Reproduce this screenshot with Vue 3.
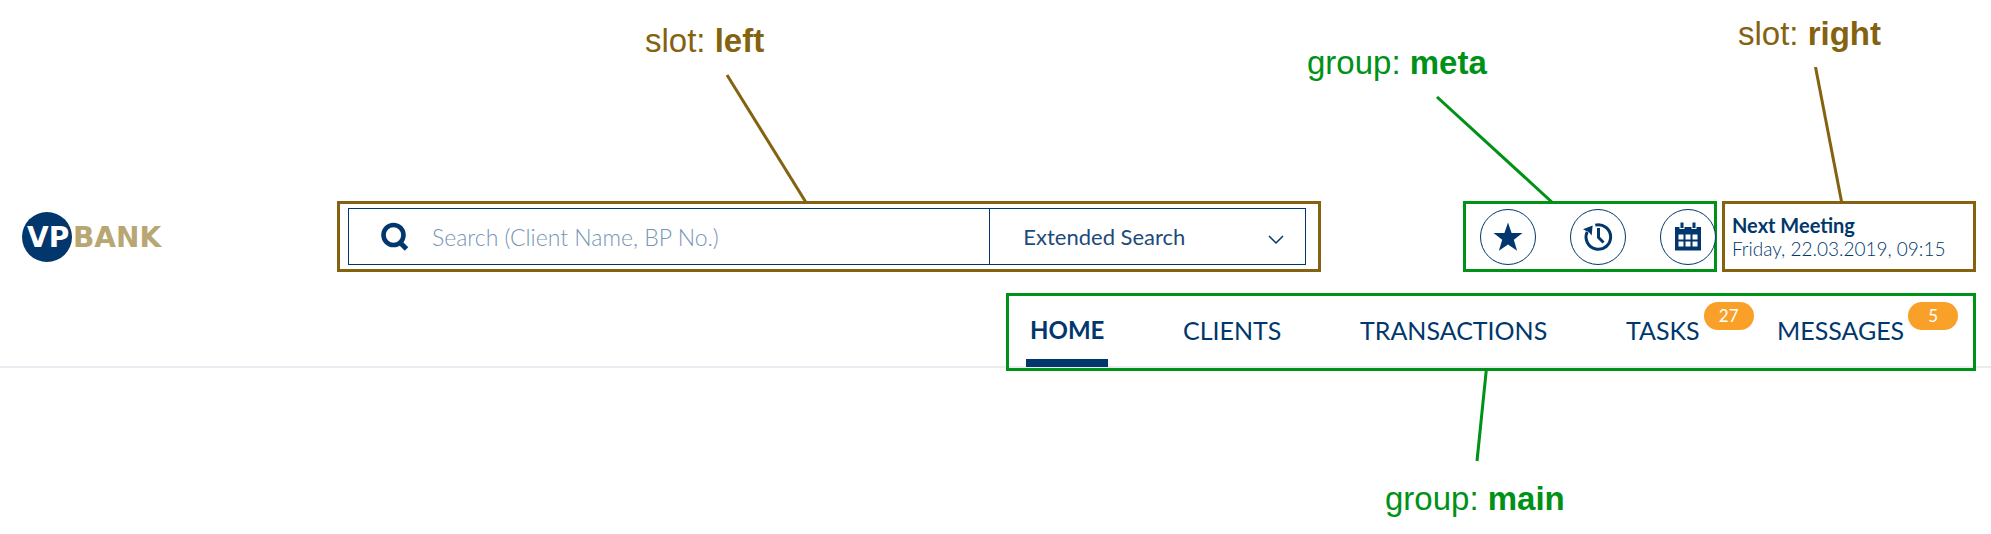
<script setup>
import { ref } from 'vue'

const query = ref('')
const mode = ref('Extended Search')

const links = [
  { label: 'HOME', active: true },
  { label: 'CLIENTS' },
  { label: 'TRANSACTIONS' },
  { label: 'TASKS', count: 27 },
  { label: 'MESSAGES', count: 5 },
]
</script>

<template>
  <div class="page">
    <header class="header">
      <div class="top">
        <a class="logo" href="#" aria-label="VP Bank">
          <svg width="156" height="52" viewBox="0 0 156 52">
            <circle cx="26" cy="26" r="25" fill="#01376c" />
            <text x="6" y="36" class="logo-vp">VP</text>
            <text x="52" y="36" class="logo-bank">BANK</text>
          </svg>
        </a>

        <section class="region slot region-left">
          <form class="search" @submit.prevent>
            <label class="query">
              <svg width="30" height="30" viewBox="0 0 30 30" fill="none" stroke="#01376c" aria-hidden="true">
                <circle cx="13.5" cy="13" r="10" stroke-width="4.6" />
                <path d="M20 20.500L26.500 27" stroke-width="5" />
              </svg>
              <input v-model="query" type="text" placeholder="Search (Client Name, BP No.)" aria-label="Search" />
            </label>
            <label class="mode">
              <select v-model="mode" aria-label="Search mode">
                <option>Extended Search</option>
              </select>
              <svg width="16" height="10" viewBox="0 0 16 10" fill="none" stroke="#01376c" stroke-width="1.5" aria-hidden="true">
                <path d="M1 1L8 8L15 1" />
              </svg>
            </label>
          </form>
          <div class="callout callout-left">
            <span class="note">slot: <b>left</b></span>
            <svg width="84" height="130" viewBox="0 0 84 130"><path d="M2 1L82 130" /></svg>
          </div>
        </section>

        <section class="region group region-meta">
          <button type="button" aria-label="Favorites">
            <svg width="30" height="30" viewBox="0 0 30 30" fill="#01376c">
              <path d="M15 0.500L18.600 10.900L29.500 11L20.800 17.700L24.100 28.800L15 22.600L5.900 28.800L9.200 17.700L0.500 11L11.400 10.900Z" />
            </svg>
          </button>
          <button type="button" aria-label="History">
            <svg width="30" height="30" viewBox="0 0 30 30" fill="none" stroke="#01376c">
              <path d="M12.300 3.100A12.300 12.300 0 1 1 4.200 9.800" stroke-width="3" />
              <path d="M0 7.200L9.600 3.600L8.700 13.600L6 10.200L3 8.800Z" fill="#01376c" stroke="none" />
              <path d="M15.500 6V15.500L20.500 20.500" stroke-width="3" />
            </svg>
          </button>
          <button type="button" aria-label="Calendar">
            <svg width="30" height="30" viewBox="0 0 30 30" fill="#01376c">
              <path d="M2 5H6.500V7H11.500V5H18.500V7H23.500V5H28V28.500H2Z" />
              <path d="M7.500 0.500H10.500V6H7.500ZM19.500 0.500H22.500V6H19.500Z" />
              <path fill="#fff" d="M5.500 12.500H10.500V17.500H5.500ZM12.500 12.500H17.500V17.500H12.500ZM19.500 12.500H24.500V17.500H19.500ZM5.500 19.500H10.500V24.500H5.500ZM12.500 19.500H17.500V24.500H12.500ZM19.500 19.500H24.500V24.500H19.500Z" />
            </svg>
          </button>
          <div class="callout callout-meta">
            <span class="note">group: <b>meta</b></span>
            <svg width="120" height="108" viewBox="0 0 120 108"><path d="M1 1L118 108" /></svg>
          </div>
        </section>

        <section class="region slot region-right">
          <strong>Next Meeting</strong>
          <span class="date">Friday, 22.03.2019, 09:15</span>
          <div class="callout callout-right">
            <span class="note">slot: <b>right</b></span>
            <svg width="30" height="137" viewBox="0 0 30 137"><path d="M1.500 0L28 137" /></svg>
          </div>
        </section>
      </div>

      <nav class="region group region-main">
        <a v-for="link in links" :key="link.label" href="#" :class="{ active: link.active }">
          {{ link.label }}<span v-if="link.count" class="badge">{{ link.count }}</span>
        </a>
        <div class="callout callout-main">
          <svg width="14" height="94" viewBox="0 0 14 94"><path d="M11.500 0L2 93" /></svg>
          <span class="note">group: <b>main</b></span>
        </div>
      </nav>
    </header>
  </div>
</template>

<style>
body {
  margin: 0;
  background: #fff;
}
</style>

<style scoped>
.page {
  min-height: 100vh;
}

.header {
  --navy: #01376c;
  --brown: #84620f;
  --green: #009217;
  box-sizing: border-box;
  padding: 201px 15px 0 21px;
  border-bottom: 2px solid #e9edf2;
  color: var(--navy);
  font-family: Lato, "Liberation Sans", sans-serif;
}

.top {
  display: grid;
  grid-template-columns: 316px minmax(0, 1fr) 254px 259px;
  align-items: stretch;
}

.logo {
  display: flex;
  align-items: center;
}

.logo svg {
  overflow: visible;
}

.logo-vp,
.logo-bank {
  font-family: "DejaVu Sans", sans-serif;
  font-size: 28px;
  font-weight: 700;
}

.logo-vp {
  fill: #fff;
}

.logo-bank {
  fill: #b8a673;
}

.region {
  position: relative;
  box-sizing: border-box;
  border: 3px solid var(--mark);
}

.slot {
  --mark: var(--brown);
}

.group {
  --mark: var(--green);
}

.region-left {
  margin-right: 142px;
  padding: 4px 12px 4px 8px;
}

.search {
  display: grid;
  grid-template-columns: minmax(0, 641fr) minmax(0, 316fr);
  box-sizing: border-box;
  height: 57px;
  border: 1px solid var(--navy);
}

.query,
.mode {
  display: flex;
  align-items: center;
}

.query {
  gap: 22px;
  padding-left: 31px;
}

.query svg {
  flex: none;
}

.query input {
  flex: 1;
  min-width: 0;
  height: 100%;
  padding: 0;
  border: 0;
  outline: 0;
  background: transparent;
  color: var(--navy);
  font: 300 23px Lato, "Liberation Sans", sans-serif;
}

.query input::placeholder {
  color: #7795b5;
  opacity: 1;
}

.mode {
  position: relative;
  border-left: 1px solid var(--navy);
}

.mode select {
  width: 100%;
  height: 100%;
  padding: 0 60px 0 33px;
  border: 0;
  outline: 0;
  appearance: none;
  background: transparent;
  color: #1d4b7b;
  font: 22px Lato, "Liberation Sans", sans-serif;
}

.mode svg {
  position: absolute;
  right: 21px;
  top: 26px;
  pointer-events: none;
}

.region-meta {
  display: flex;
  align-items: center;
  justify-content: space-between;
  padding-left: 14px;
}

.region-meta button {
  display: flex;
  align-items: center;
  justify-content: center;
  width: 56px;
  height: 56px;
  padding: 0;
  border: 1px solid var(--navy);
  border-radius: 50%;
  background: #fff;
}

.region-meta button:last-of-type {
  margin-right: -2px;
}

.region-right {
  display: flex;
  flex-direction: column;
  justify-content: center;
  margin-left: 5px;
  padding-left: 7px;
  font-size: 20px;
  line-height: 24px;
  white-space: nowrap;
}

.date {
  font-size: 19px;
  font-weight: 300;
}

.region-main {
  display: grid;
  grid-template-columns: 153px 177px 266px 151px auto;
  justify-content: start;
  width: 970px;
  height: 78px;
  margin: 21px 0 -5px auto;
  padding: 0 0 1px 17px;
}

.region-main a {
  display: flex;
  position: relative;
  box-sizing: border-box;
  justify-self: start;
  height: 71px;
  padding: 19px 4px 0;
  color: var(--navy);
  font-size: 25px;
  line-height: 30px;
  text-decoration: none;
}

.region-main a.active {
  border-bottom: 8px solid var(--navy);
  font-size: 24px;
  font-weight: 700;
}

.badge {
  position: absolute;
  top: 6px;
  left: 100%;
  width: 50px;
  border-radius: 14px;
  background: #f9a028;
  color: #fff;
  font-size: 17px;
  line-height: 28px;
  text-align: center;
}

.callout {
  position: absolute;
  display: flex;
  flex-direction: column;
  color: var(--mark);
  font: 33px/38px "Liberation Sans", Arial, sans-serif;
  white-space: nowrap;
}

.callout svg {
  fill: none;
  stroke: var(--mark);
  stroke-width: 3;
}

.callout-left {
  bottom: 100%;
  left: 305px;
  gap: 14px;
}

.callout-left svg {
  margin-left: 80px;
}

.callout-meta {
  bottom: 100%;
  left: -159px;
  gap: 14px;
}

.callout-meta svg {
  margin-left: 129px;
}

.callout-right {
  bottom: 100%;
  left: 13px;
  gap: 14px;
}

.callout-right svg {
  margin-left: 76px;
}

.callout-main {
  top: 100%;
  left: 376px;
  gap: 18px;
}

.callout-main svg {
  margin-left: 90px;
}
</style>
